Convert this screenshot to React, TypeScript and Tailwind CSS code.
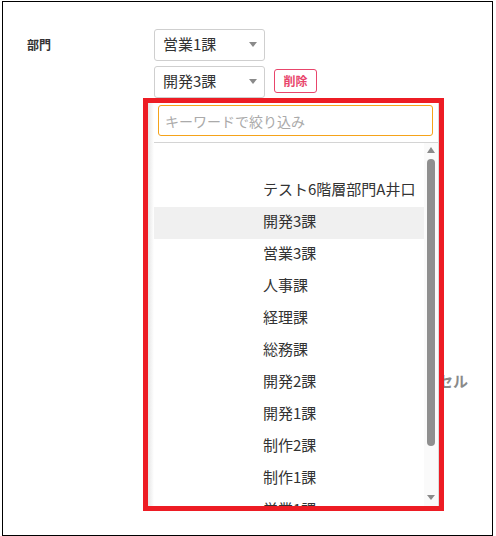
import React from "react";

const items = [
  "",
  "テスト6階層部門A井口",
  "開発3課",
  "営業3課",
  "人事課",
  "経理課",
  "総務課",
  "開発2課",
  "開発1課",
  "制作2課",
  "制作1課",
  "営業1課",
];

function Caret() {
  return (
    <span className="h-0 w-0 border-x-[4px] border-t-[5px] border-x-transparent border-t-[#8a8a8a]" />
  );
}

function Select({ value }: { value: string }) {
  return (
    <div className="flex h-[32px] w-[111px] items-center justify-between rounded-[3px] border border-[#cfcfcf] bg-white pb-[2px] pl-[8px] pr-[7px] text-[15px] text-[#333]">
      <span>{value}</span>
      <Caret />
    </div>
  );
}

export default function App() {
  return (
    <div
      className="min-h-[536px] bg-white pt-[1px] pl-[2px]"
      style={{ fontFamily: '"Noto Sans CJK JP", "Noto Sans", sans-serif' }}
    >
      <div className="relative h-[535px] w-[491px] border border-black">
        <div className="flex pt-[27px] pl-[24px]">
          <div className="flex h-[32px] w-[127px] items-center text-[12px] font-bold text-[#333]">
            部門
          </div>
          <div className="flex flex-col gap-[5px]">
            <Select value="営業1課" />
            <div className="flex items-center gap-[9px]">
              <Select value="開発3課" />
              <button className="-mt-[2px] flex h-[24px] w-[43px] items-center justify-center rounded-[3px] border border-[#e8456b] text-[12px] font-bold text-[#e8456b]">
                削除
              </button>
            </div>
          </div>
        </div>

        <div className="mt-[273px] flex justify-end pr-[24px]">
          <button className="h-[20px] text-[15px] leading-[20px] font-bold text-[#8a8a8a]">
            キャンセル
          </button>
        </div>

        {/* dropdown (annotated with red frame) */}
        <div className="absolute top-[96px] left-[140px] flex h-[413px] w-[301px] border-[5px] border-[#ed1c24] bg-white">
          <div className="w-[6px] bg-gradient-to-r from-[#e6e6e6] to-white" />
          <div className="flex flex-1 flex-col border-r border-[#dcdcdc]">
            <div className="h-[39px] pt-[2px] pr-[5px] pl-[4px]">
              <input
                placeholder="キーワードで絞り込み"
                className="h-[31px] w-full rounded-[3px] border border-[#f5a31a] px-[6px] text-[14px] text-[#333] placeholder:text-[#aaa] focus:outline-none"
              />
            </div>
            <div className="flex min-h-0 flex-1 border-t border-[#d4d4d4]">
              <div className="flex-1 overflow-hidden">
                {items.map((it, i) => (
                  <div
                    key={i}
                    className={`flex h-[32px] items-center pb-[3px] pl-[109px] text-[15px] whitespace-nowrap text-[#333] ${
                      it === "開発3課" ? "bg-[#f0f0f0]" : ""
                    }`}
                  >
                    {it}
                  </div>
                ))}
              </div>
              <div className="flex w-[14px] flex-col items-center bg-[#fafafa] pt-[4px] pb-[6px]">
                <span className="h-0 w-0 border-x-[4px] border-b-[6px] border-x-transparent border-b-[#8a8a8a]" />
                <div className="mt-[6px] h-[287px] w-[8px] rounded-full bg-[#8f8f8f]" />
                <div className="flex-1" />
                <Caret />
              </div>
            </div>
          </div>
        </div>
      </div>
    </div>
  );
}
